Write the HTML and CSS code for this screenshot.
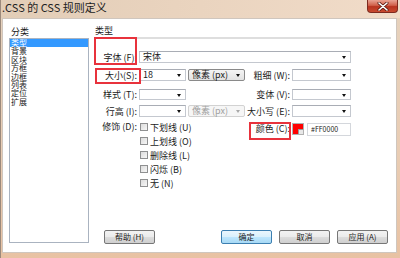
FILE: index.html
```html
<!DOCTYPE html>
<html lang="zh-CN">
<head>
    <meta charset="UTF-8">
    <title>.CSS 的 CSS 规则定义</title>
    <link rel="stylesheet" href="styles.css">
</head>
<body>
    <div class="window">
        <div class="titlebar">
            <span class="title">.CSS 的 CSS 规则定义</span>
            <span class="close">
                <svg width="12" height="9" viewBox="0 0 12 9">
                    <path d="M2 1 L10 8 M10 1 L2 8" stroke="#5a1a12" stroke-width="3" stroke-linecap="round"/>
                    <path d="M2 1 L10 8 M10 1 L2 8" stroke="#ffffff" stroke-width="1.6" stroke-linecap="round"/>
                </svg>
            </span>
        </div>

        <div class="client">
            <div class="category">
                <div class="cat-label">分类</div>
                <ul class="cat-list">
                    <li class="selected">类型</li>
                    <li>背景</li>
                    <li>区块</li>
                    <li>方框</li>
                    <li>边框</li>
                    <li>列表</li>
                    <li>定位</li>
                    <li>扩展</li>
                </ul>
            </div>

            <div class="panel">
                <div class="panel-head">类型</div>

                <div class="form-row row-font">
                    <label class="lbl">字体 (F):</label>
                    <div class="combo wide"><span>宋体</span></div>
                </div>

                <div class="form-row row-size">
                    <label class="lbl">大小(S):</label>
                    <div class="combo"><span>18</span></div>
                    <div class="unit"><span>像素 (px)</span></div>
                    <label class="lbl">粗细 (W):</label>
                    <div class="combo"></div>
                </div>

                <div class="form-row row-style">
                    <label class="lbl">样式 (T):</label>
                    <div class="combo"></div>
                    <div></div>
                    <label class="lbl">变体 (V):</label>
                    <div class="combo"></div>
                </div>

                <div class="form-row row-height">
                    <label class="lbl">行高 (I):</label>
                    <div class="combo"></div>
                    <div class="unit disabled"><span>像素 (px)</span></div>
                    <label class="lbl">大小写 (E):</label>
                    <div class="combo"></div>
                </div>

                <div class="form-row row-deco">
                    <label class="lbl">修饰 (D):</label>
                    <ul class="checks">
                        <li><span class="box"></span>下划线 (U)</li>
                        <li><span class="box"></span>上划线 (O)</li>
                        <li><span class="box"></span>删除线 (L)</li>
                        <li><span class="box"></span>闪烁 (B)</li>
                        <li><span class="box"></span>无 (N)</li>
                    </ul>
                    <label class="lbl color-lbl">颜色 (C):</label>
                    <div class="color-group">
                        <span class="swatch"></span>
                        <div class="text-input">#FF0000</div>
                    </div>
                </div>

                <div class="buttons">
                    <button class="btn">帮助 (H)</button>
                    <span class="spacer"></span>
                    <button class="btn default">确定</button>
                    <button class="btn">取消</button>
                    <button class="btn">应用 (A)</button>
                </div>
            </div>

            <!-- red highlight boxes drawn over the dialog -->
            <span class="mark mark-font"></span>
            <span class="mark mark-size"></span>
            <span class="mark mark-color"></span>
        </div>
    </div>
</body>
</html>
```

FILE: styles.css
```css
body {
    margin: 0;
    font-family: "Noto Sans CJK SC", "DejaVu Sans", sans-serif;
    font-size: 9px;
    color: #1a1a1a;
    background-color: #e9c6a8;
}
.window {
    width: 400px;
    height: 258px;
    background: linear-gradient(to bottom, #e6d2bd, #e9cdb4 60%, #e8c2a3);
    border-left: 1px solid #9c8a7c;
    box-sizing: border-box;
}
.titlebar {
    height: 18px;
    display: flex;
    align-items: flex-start;
    background: linear-gradient(to right, #e2cdb7, #ead4bf 50%, #f1dcc9);
}
.title {
    font-size: 11px;
    line-height: 14px;
    padding-left: 1px;
    color: #222;
}
.close {
    margin-left: auto;
    margin-right: 2px;
    width: 31px;
    height: 13px;
    box-sizing: border-box;
    border: 1px solid #7d2a1f;
    border-top: none;
    border-radius: 0 0 4px 4px;
    background: linear-gradient(to bottom, #e9a393, #d0604a 45%, #b8331f 55%, #c84a30);
    display: flex;
    align-items: center;
    justify-content: center;
}
.close svg {
    display: block;
}
.client {
    position: relative;
    display: flex;
    margin-left: 1px;
    margin-right: 3px;
    height: 235px;
    box-sizing: border-box;
    padding-top: 7px;
    background-color: #ffffff;
    border: 1px solid #cfc6be;
}

/* category list */
.category {
    margin-left: 6px;
    width: 80px;
}
.cat-label {
    height: 12px;
    line-height: 12px;
    padding-left: 2px;
}
.cat-list {
    list-style: none;
    margin: 0;
    padding: 0;
    height: 205px;
    box-sizing: border-box;
    border: 1px solid #aab3c0;
}
.cat-list li {
    height: 8.4px;
    line-height: 8.4px;
    font-size: 8px;
    padding-left: 1px;
    white-space: nowrap;
}
.cat-list li.selected {
    background-color: #3399ff;
    color: #ffffff;
}

/* right panel */
.panel {
    margin-left: 4px;
    width: 298px;
    display: flex;
    flex-direction: column;
}
.panel-head {
    height: 11px;
    line-height: 10px;
    margin-left: 2px;
    border-bottom: 2px solid #dedede;
}
.form-row {
    display: grid;
    grid-template-columns: 44px 47px 57px 43px 59px;
    column-gap: 2px;
    align-items: center;
}
.row-font { margin-top: 12px; height: 11px; }
.row-size { margin-top: 7px; height: 12px; }
.row-style { margin-top: 8px; height: 11px; }
.row-height { margin-top: 5px; height: 12px; }
.row-deco { margin-top: 3px; align-items: start; }

.lbl {
    text-align: right;
    white-space: nowrap;
    line-height: 11px;
}
.combo, .unit, .text-input {
    position: relative;
    height: 100%;
    box-sizing: border-box;
    border: 1px solid #c4c8cf;
    border-top-color: #a9adb5;
    background-color: #ffffff;
    line-height: 10px;
    padding-left: 3px;
    white-space: nowrap;
}
.combo::after, .unit::after {
    content: "";
    position: absolute;
    right: 4px;
    top: 50%;
    margin-top: -1px;
    border-left: 2.5px solid transparent;
    border-right: 2.5px solid transparent;
    border-top: 3px solid #111;
}
.combo.wide {
    grid-column: 2 / 6;
}
.unit {
    border: 1px solid #8a8a8a;
    border-radius: 2px;
    background: linear-gradient(to bottom, #f4f4f4, #e2e2e2);
}
.unit.disabled {
    border-color: #d2d2d2;
    background: #f6f6f6;
    color: #a0a0a0;
}
.unit.disabled::after {
    border-top-color: #a8a8a8;
}

/* decoration checkboxes */
.row-deco .lbl {
    line-height: 14px;
}
.checks {
    grid-column: 2 / 4;
    list-style: none;
    margin: 0;
    padding: 0 0 0 1px;
}
.checks li {
    height: 14px;
    display: flex;
    align-items: center;
    gap: 2px;
}
.box {
    width: 8px;
    height: 8px;
    box-sizing: border-box;
    border: 1px solid #8f9091;
    background: linear-gradient(135deg, #dcdcdc, #f7f7f7);
}
.color-lbl {
    margin-top: 2px;
    line-height: 14px;
}
.color-group {
    margin-top: 3px;
    display: flex;
    align-items: flex-start;
    gap: 3px;
}
.swatch {
    position: relative;
    width: 12px;
    height: 12px;
    box-sizing: border-box;
    border: 1px solid #b0b0b0;
    background-color: #ff0000;
}
.swatch::after {
    content: "";
    position: absolute;
    right: 0;
    bottom: 0;
    width: 4px;
    height: 4px;
    background-color: #e8e8e8;
    border-left: 1px solid #999;
    border-top: 1px solid #999;
}
.text-input {
    width: 44px;
    height: 13px;
    font-size: 7px;
    line-height: 11px;
    border-color: #d4d7dc;
}

/* buttons */
.buttons {
    margin-top: 40px;
    display: flex;
    gap: 7px;
    padding-left: 11px;
}
.spacer {
    flex: 1;
}
.btn {
    width: 51px;
    height: 14px;
    padding: 0;
    font-family: inherit;
    font-size: 8px;
    line-height: 12px;
    color: #1a1a1a;
    border: 1px solid #777;
    border-radius: 2px;
    background: linear-gradient(to bottom, #f3f3f3, #ebebeb 50%, #dddddd 51%, #cfcfcf);
}
.btn.default {
    border-color: #3c7fb1;
    background: linear-gradient(to bottom, #eaf6fd, #d9f0fc 50%, #bee6fd 51%, #a7d9f5);
}
.buttons .btn:last-child {
    margin-right: 3px;
}

/* red annotation boxes */
.mark {
    position: absolute;
    box-sizing: border-box;
    border: 2px solid #e8323c;
}
.mark-font { left: 91px; top: 18px; width: 43px; height: 28px; }
.mark-size { left: 92px; top: 49px; width: 46px; height: 16px; }
.mark-color { left: 246px; top: 103px; width: 42px; height: 18px; }
```
